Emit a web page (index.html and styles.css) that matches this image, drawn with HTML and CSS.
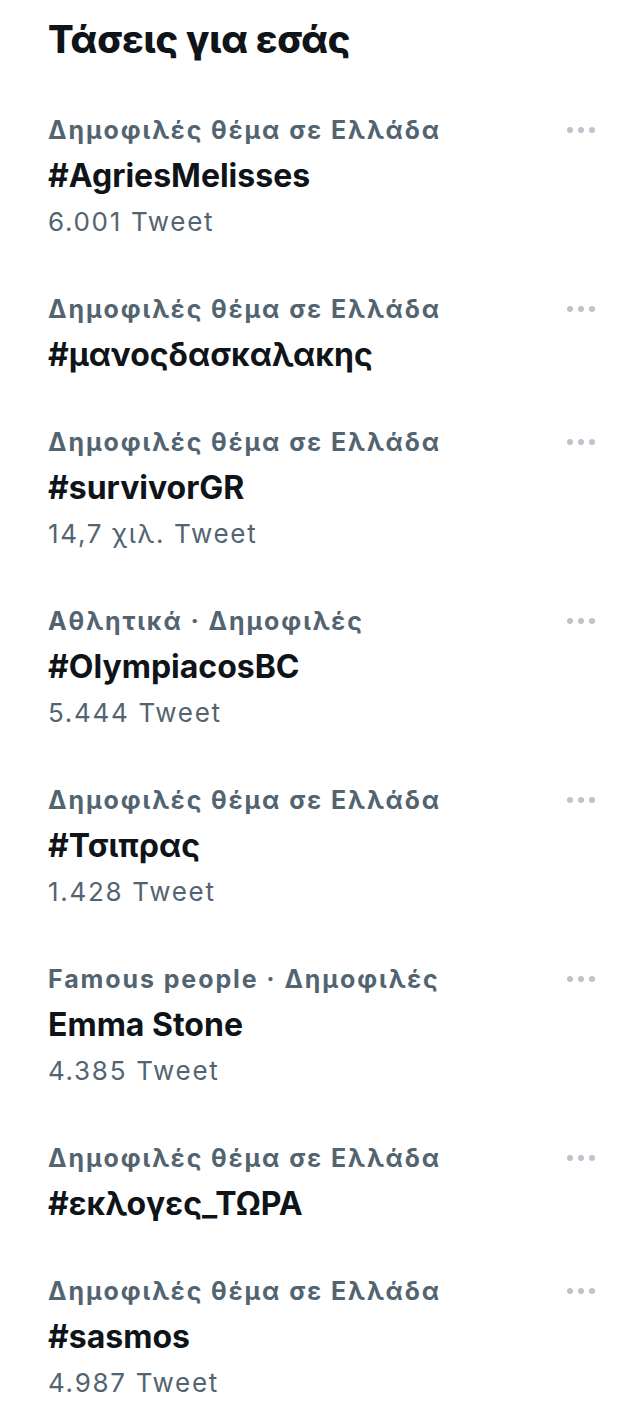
FILE: index.html
```html
<!DOCTYPE html>
<html lang="el">
<head>
<meta charset="utf-8">
<link rel="stylesheet" href="styles.css">
</head>
<body>
<main class="page">
  <h1 class="heading">Τάσεις για εσάς</h1>
  <ul class="trends">
    <li class="trend">
      <div class="trend-body">
        <div class="meta">Δημοφιλές θέμα σε Ελλάδα</div>
        <div class="name">#AgriesMelisses</div>
        <div class="count">6.001 Tweet</div>
      </div>
      <span class="more"><i></i><i></i><i></i></span>
    </li>
    <li class="trend">
      <div class="trend-body">
        <div class="meta">Δημοφιλές θέμα σε Ελλάδα</div>
        <div class="name">#μανοςδασκαλακης</div>
      </div>
      <span class="more"><i></i><i></i><i></i></span>
    </li>
    <li class="trend">
      <div class="trend-body">
        <div class="meta">Δημοφιλές θέμα σε Ελλάδα</div>
        <div class="name">#survivorGR</div>
        <div class="count">14,7 χιλ. Tweet</div>
      </div>
      <span class="more"><i></i><i></i><i></i></span>
    </li>
    <li class="trend">
      <div class="trend-body">
        <div class="meta">Αθλητικά · Δημοφιλές</div>
        <div class="name">#OlympiacosBC</div>
        <div class="count">5.444 Tweet</div>
      </div>
      <span class="more"><i></i><i></i><i></i></span>
    </li>
    <li class="trend">
      <div class="trend-body">
        <div class="meta">Δημοφιλές θέμα σε Ελλάδα</div>
        <div class="name">#Τσιπρας</div>
        <div class="count">1.428 Tweet</div>
      </div>
      <span class="more"><i></i><i></i><i></i></span>
    </li>
    <li class="trend">
      <div class="trend-body">
        <div class="meta">Famous people · Δημοφιλές</div>
        <div class="name">Emma Stone</div>
        <div class="count">4.385 Tweet</div>
      </div>
      <span class="more"><i></i><i></i><i></i></span>
    </li>
    <li class="trend">
      <div class="trend-body">
        <div class="meta">Δημοφιλές θέμα σε Ελλάδα</div>
        <div class="name">#εκλογες_ΤΩΡΑ</div>
      </div>
      <span class="more"><i></i><i></i><i></i></span>
    </li>
    <li class="trend">
      <div class="trend-body">
        <div class="meta">Δημοφιλές θέμα σε Ελλάδα</div>
        <div class="name">#sasmos</div>
        <div class="count">4.987 Tweet</div>
      </div>
      <span class="more"><i></i><i></i><i></i></span>
    </li>
  </ul>
</main>
</body>
</html>
```

FILE: styles.css
```css
html, body {
  margin: 0;
  padding: 0;
  background: #ffffff;
}

body {
  font-family: Inter, "Noto Sans", "Liberation Sans", sans-serif;
  color: #0f1419;
}

.page {
  padding: 17px 38px 0 48px;
}

.heading {
  margin: 0;
  font-size: 38px;
  line-height: 44px;
  font-weight: 800;
  letter-spacing: -0.2px;
}

.trends {
  list-style: none;
  margin: 46px 0 0 0;
  padding: 0;
}

.trend {
  display: flex;
  justify-content: space-between;
  align-items: flex-start;
  padding-bottom: 41px;
}

.trend-body {
  display: flex;
  flex-direction: column;
}

.meta {
  font-size: 25px;
  line-height: 46px;
  font-weight: 700;
  letter-spacing: 1.9px;
  color: #536471;
}

.name {
  font-size: 32px;
  line-height: 46px;
  font-weight: 700;
  color: #0f1419;
}

.count {
  font-size: 26px;
  line-height: 46px;
  font-weight: 400;
  letter-spacing: 1.7px;
  color: #536471;
}

.more {
  display: flex;
  gap: 5px;
  height: 46px;
  align-items: center;
}

.more i {
  width: 6px;
  height: 6px;
  border-radius: 50%;
  background: #bcc3ca;
}
```
